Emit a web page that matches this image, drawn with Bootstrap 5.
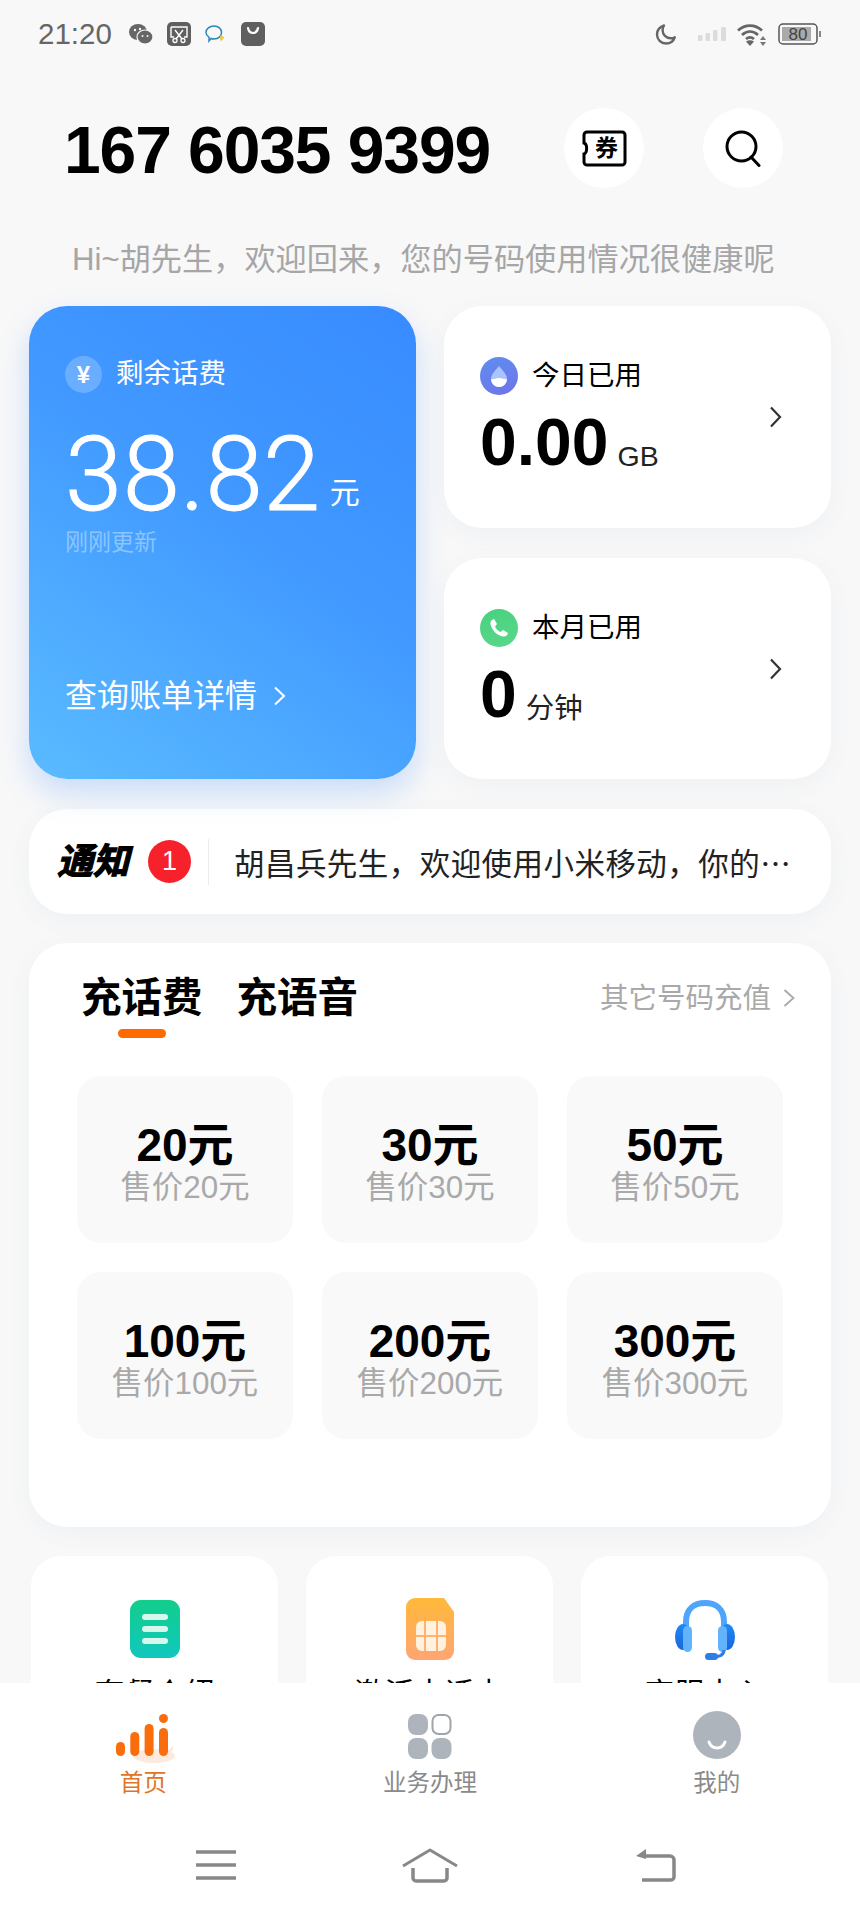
<!DOCTYPE html>
<html lang="zh">
  <head>
    <meta charset="UTF-8" />
    <meta name="viewport" content="width=device-width, initial-scale=1.0" />
    <title>小米移动</title>
    <link
      rel="stylesheet"
      href="https://cdn.jsdelivr.net/npm/bootstrap@5.3.3/dist/css/bootstrap.min.css"
    />
    <style>
      html,
      body {
        height: 1917px;
        overflow: hidden;
      }

      body {
        font-family: "Liberation Sans", "Noto Sans CJK SC", sans-serif;
        background-color: #f8f8f8;
        color: #000;
      }

      svg {
        display: block;
      }

      /* status bar */
      .status-bar {
        height: 66px;
        padding: 2px 38px 0;
        color: #666;
      }

      .status-time {
        font-size: 29.5px;
        width: 77px;
      }

      .status-apps {
        gap: 14px;
      }

      .signal-gap {
        margin: 0 10px 0 21px;
      }

      .battery-gap {
        margin-left: 11px;
      }

      /* header */
      .top-head {
        padding: 42px 77px 0 64px;
        height: 122px;
      }

      .phone-no {
        font-size: 66px;
        font-weight: 700;
        line-height: 84px;
        letter-spacing: -1.1px;
      }

      .head-actions {
        gap: 59px;
      }

      .round-btn {
        width: 80px;
        height: 80px;
        background: #fff;
        border-radius: 50%;
      }

      .ticket-text {
        font-size: 23px;
        font-weight: 700;
        line-height: 1;
      }

      .ticket-box {
        width: 46px;
        height: 37px;
      }

      .ticket-box span {
        position: absolute;
        left: 14px;
        top: 7px;
      }

      .greeting {
        font-size: 31.2px;
        line-height: 40px;
        color: #a6a6a6;
        padding: 52px 0 0 72px;
        height: 118px;
      }

      /* cards */
      .home-body {
        padding: 0 29px;
      }

      .white-card {
        background: #fff;
        border-radius: 38px;
        box-shadow: 0 6px 24px rgba(60, 90, 160, 0.05);
      }

      .usage-grid {
        display: grid;
        grid-template-columns: 387px 387px;
        column-gap: 28px;
        height: 473px;
      }

      .balance-card {
        background: linear-gradient(215deg, #388bff 0%, #4199ff 45%, #5abbff 100%);
        border-radius: 38px;
        box-shadow: 0 14px 30px rgba(60, 140, 255, 0.25);
        color: #fff;
        padding: 49px 0 0 36px;
      }

      .yen-icon {
        width: 37px;
        height: 37px;
        border-radius: 50%;
        background: rgba(255, 255, 255, 0.22);
        font-size: 24px;
        font-weight: 700;
        line-height: 37px;
        text-align: center;
      }

      .card-label {
        font-size: 27.5px;
        line-height: 38px;
      }

      .label-row {
        gap: 14px;
      }

      .balance-num {
        font-family: Roboto, "Liberation Sans", sans-serif;
        font-weight: 300;
        font-size: 103px;
        line-height: 100px;
        letter-spacing: 0.5px;
        -webkit-text-stroke: 1px #fff;
      }

      .balance-unit {
        font-size: 30px;
        line-height: 30px;
        margin-left: 9px;
        margin-bottom: 17px;
      }

      .balance-row {
        margin-top: 32px;
      }

      .balance-time {
        font-size: 23px;
        line-height: 30px;
        color: rgba(255, 255, 255, 0.38);
        margin-top: 2px;
      }

      .balance-link {
        font-size: 32px;
        line-height: 40px;
        margin-top: 119px;
      }

      .usage-col {
        display: grid;
        grid-template-rows: 222px 221px;
        row-gap: 30px;
      }

      .usage-card {
        padding: 51px 47px 0 36px;
      }

      .usage-icon {
        width: 38px;
        height: 38px;
        border-radius: 50%;
      }

      .usage-icon.water {
        background: linear-gradient(160deg, #5f8ef0, #6f73e8);
      }

      .usage-icon.call {
        background: linear-gradient(160deg, #48d17f, #5ad88a);
      }

      .usage-num {
        font-size: 66px;
        line-height: 66px;
        font-weight: 700;
      }

      .usage-unit {
        font-size: 28.5px;
        line-height: 30px;
        margin-left: 9px;
        margin-bottom: 4px;
        color: #222;
      }

      .usage-row {
        margin-top: 14px;
      }

      .usage-arrow {
        position: absolute;
        right: 49px;
        top: 100px;
      }

      /* notice */
      .notice-bar {
        margin-top: 30px;
        height: 105px;
        padding-left: 28px;
      }

      .notice-title {
        font-size: 36px;
        font-weight: 700;
        font-style: italic;
        width: 91px;
        -webkit-text-stroke: 1.2px #000;
        line-height: 40px;
      }

      .notice-count {
        width: 43px;
        height: 43px;
        border-radius: 50%;
        background: #f6212a;
        color: #fff;
        font-size: 27px;
        line-height: 43px;
        text-align: center;
      }

      .notice-sep {
        width: 1px;
        height: 46px;
        background: #ececec;
        margin: 0 25px 0 17px;
      }

      .notice-text {
        font-family: "Noto Sans CJK SC", sans-serif;
        font-size: 30.5px;
        line-height: 40px;
        letter-spacing: 0.45px;
        color: #222;
      }

      /* recharge */
      .recharge-card {
        margin-top: 29px;
        height: 584px;
        padding: 30px 48px 0 48px;
      }

      .recharge-tab {
        font-size: 40.5px;
        font-weight: 700;
        line-height: 50px;
        margin-left: 4px;
      }

      .recharge-tab + .recharge-tab {
        margin-left: 34px;
      }

      .tab-mark {
        width: 48px;
        height: 9px;
        border-radius: 5px;
        background: #ff6a00;
        position: absolute;
        left: 37px;
        top: 56px;
      }

      .other-link {
        font-size: 28.5px;
        line-height: 40px;
        color: #a9a9a9;
        margin-right: -12px;
        gap: 12px;
      }

      .amount-grid {
        display: grid;
        grid-template-columns: repeat(3, 216px);
        grid-auto-rows: 167px;
        column-gap: 29px;
        row-gap: 29px;
        margin-top: 53px;
      }

      .amount-tile {
        background: #f9f9f9;
        border-radius: 24px;
        padding-top: 46px;
        text-align: center;
      }

      .amount-main {
        font-size: 46px;
        font-weight: 700;
        line-height: 46px;
      }

      .amount-sub {
        font-size: 31.4px;
        line-height: 39px;
        color: #a9a9a9;
      }

      /* service cards, cut off by the tab bar */
      .service-grid {
        display: grid;
        grid-template-columns: repeat(3, 247px);
        column-gap: 28px;
        margin: 29px 2px 0;
      }

      .service-card {
        background: #fff;
        border-radius: 30px;
        height: 240px;
        padding-top: 42px;
        text-align: center;
      }

      .service-icon {
        height: 64px;
      }

      .glyph-low {
        margin-top: 2px;
      }

      .service-text {
        font-size: 30px;
        line-height: 40px;
        margin-top: 12px;
      }

      /* tab bar */
      .tab-bar {
        height: 234px;
        background: #fff;
        flex-shrink: 0;
      }

      .tab-row {
        display: grid;
        grid-template-columns: repeat(3, 1fr);
        padding-top: 28px;
        height: 150px;
      }

      .tab-icon {
        height: 52px;
      }

      .glyph-home {
        margin: 3px 0 0 6px;
      }

      .glyph-grid {
        margin-top: 2px;
      }

      .tab-label {
        font-size: 23.5px;
        line-height: 30px;
        color: #8a8a8a;
        margin-top: 5px;
      }

      .tab-label.on {
        color: #e0752a;
      }

      .key-row {
        padding: 15px 184px 0 196px;
      }

      .home-key {
        margin-left: -12px;
      }
    </style>
  </head>
  <body class="d-flex flex-column">
    <div class="flex-grow-1 overflow-hidden">
      <!-- status bar -->
      <div class="status-bar d-flex justify-content-between align-items-center">
        <div class="d-flex align-items-center status-apps">
          <span class="status-time">21:20</span>
          <svg width="24" height="20" viewBox="0 0 24 20">
            <ellipse cx="9" cy="8" rx="9" ry="8" fill="#666" />
            <ellipse cx="16" cy="13" rx="8" ry="7" fill="#666" stroke="#f8f8f8" stroke-width="1.2" />
            <circle cx="6" cy="6" r="1.2" fill="#f8f8f8" />
            <circle cx="11" cy="5" r="1.2" fill="#f8f8f8" />
            <circle cx="13.5" cy="12" r="1" fill="#f8f8f8" />
            <circle cx="18.5" cy="12" r="1" fill="#f8f8f8" />
          </svg>
          <svg width="24" height="24" viewBox="0 0 24 24">
            <rect width="24" height="24" rx="5" fill="#5f5f5f" />
            <path d="M4 5h16v10h-3M4 5v10h3" fill="none" stroke="#fff" stroke-width="1.4" />
            <path d="M8 8l7 9M16 8l-7 9" stroke="#fff" stroke-width="1.4" />
            <circle cx="8" cy="18.5" r="2" fill="none" stroke="#fff" stroke-width="1.3" />
            <circle cx="16" cy="18.5" r="2" fill="none" stroke="#fff" stroke-width="1.3" />
          </svg>
          <svg width="22" height="20" viewBox="0 0 22 20">
            <path d="M9 2c4.400 0 7.500 2.800 7.500 6.500S13.400 15 9 15c-1 0-2-.2-2.800-.5L4 17l.1-3.600C2.200 12 1 10.200 1 8.500 1 4.800 4.600 2 9 2z" fill="none" stroke="#2a86b8" stroke-width="1.500" />
            <path d="M16 11l3.500 2.500-3.500 4-1.500-3.500z" fill="#f0c94f" />
          </svg>
          <svg width="24" height="24" viewBox="0 0 24 24">
            <rect width="24" height="24" rx="5" fill="#5f5f5f" />
            <path d="M7 6c.6 3.400 2.400 5 5 5s4.400-1.600 5-5" fill="none" stroke="#fff" stroke-width="2.200" stroke-linecap="round" />
          </svg>
        </div>
        <div class="d-flex align-items-center">
          <svg width="22" height="21" viewBox="0 0 22 21">
            <path d="M9 1.500C4.800 3 2 6.200 2 10.500c0 5 4 9 9 9 4 0 7.500-2.500 8.800-6.200-1.200.7-2.600 1-4 1-4.800 0-8.200-3.800-8.200-8 0-2 .4-3.500 1.400-4.800z" fill="none" stroke="#666" stroke-width="2.400" stroke-linejoin="round" />
          </svg>
          <svg class="signal-gap" width="28" height="14" viewBox="0 0 28 14">
            <rect x="0" y="8" width="4.500" height="6" rx="1" fill="#dcdcdc" />
            <rect x="7.500" y="6" width="4.500" height="8" rx="1" fill="#dcdcdc" />
            <rect x="15" y="3" width="4.500" height="11" rx="1" fill="#dcdcdc" />
            <rect x="23" y="0" width="5" height="14" rx="1" fill="#dcdcdc" />
          </svg>
          <svg width="31" height="23" viewBox="0 0 31 23">
            <path d="M2 7.500C9 1 19 1 26 7.500M6 12c5-4.500 11-4.500 16 0M10 16c2.800-2.300 5.200-2.300 8 0" fill="none" stroke="#666" stroke-width="2.800" />
            <path d="M14 23l-4-4.500c2.500-1.700 5.500-1.700 8 0z" fill="#666" />
            <path d="M27 13l3 4h-6zM27 23l3-4h-6z" fill="#777" />
          </svg>
          <svg class="battery-gap" width="44" height="22" viewBox="0 0 44 22">
            <rect x="1" y="1" width="38" height="20" rx="4" fill="none" stroke="#555" stroke-width="1.500" />
            <rect x="4" y="4" width="29" height="14" fill="#aaa" />
            <rect x="41" y="8" width="2" height="6" fill="#888" />
            <text x="20" y="17" text-anchor="middle" font-size="17" fill="#444" font-family="Liberation Sans">80</text>
          </svg>
        </div>
      </div>

      <!-- number and actions -->
      <div class="top-head d-flex justify-content-between">
        <div class="phone-no">167 6035 9399</div>
        <div class="d-flex head-actions">
          <div class="round-btn d-flex align-items-center justify-content-center">
            <div class="ticket-box position-relative">
              <svg width="46" height="37" viewBox="0 0 46 37">
                <path d="M6 2h35a3 3 0 0 1 3 3v27a3 3 0 0 1-3 3H6a3 3 0 0 1-3-3v-8c3.500-1 3.500-10 0-11V5a3 3 0 0 1 3-3z" fill="none" stroke="#000" stroke-width="3" />
              </svg>
              <span class="ticket-text">券</span>
            </div>
          </div>
          <div class="round-btn d-flex align-items-center justify-content-center">
            <svg width="37" height="37" viewBox="0 0 37 37">
              <circle cx="16.500" cy="16.500" r="14.500" fill="none" stroke="#000" stroke-width="3" />
              <path d="M26 27l8 8.500" stroke="#000" stroke-width="3" stroke-linecap="round" />
            </svg>
          </div>
        </div>
      </div>

      <div class="greeting">Hi~胡先生，欢迎回来，您的号码使用情况很健康呢</div>

      <div class="home-body">
        <div class="usage-grid">
          <div class="balance-card">
            <div class="d-flex align-items-center label-row">
              <div class="yen-icon">¥</div>
              <div class="card-label">剩余话费</div>
            </div>
            <div class="balance-row d-flex align-items-end">
              <div class="balance-num">38.82</div>
              <div class="balance-unit">元</div>
            </div>
            <div class="balance-time">刚刚更新</div>
            <div class="balance-link d-flex align-items-center gap-3">
              查询账单详情
              <svg width="13" height="20" viewBox="0 0 13 20">
                <path d="M2 1.500l9 8.500-9 8.500" fill="none" stroke="#fff" stroke-width="2" />
              </svg>
            </div>
          </div>

          <div class="usage-col">
            <div class="white-card usage-card position-relative">
              <div class="d-flex align-items-center label-row">
                <div class="usage-icon water d-flex align-items-center justify-content-center">
                  <svg width="18" height="22" viewBox="0 0 18 22">
                    <path d="M9 1c3 4 8 8 8 13a8 8 0 0 1-16 0c0-5 5-9 8-13z" fill="#a9c4ff" />
                    <path d="M1 14c2 1 4-1 8-1s6 2 8 1a8 8 0 0 1-16 0z" fill="#fff" />
                  </svg>
                </div>
                <div class="card-label">今日已用</div>
              </div>
              <div class="usage-row d-flex align-items-end">
                <div class="usage-num">0.00</div>
                <div class="usage-unit">GB</div>
              </div>
              <svg class="usage-arrow" width="13" height="22" viewBox="0 0 13 22">
                <path d="M2 1.500l9 9.500-9 9.500" fill="none" stroke="#333" stroke-width="2.200" />
              </svg>
            </div>
            <div class="white-card usage-card position-relative">
              <div class="d-flex align-items-center label-row">
                <div class="usage-icon call d-flex align-items-center justify-content-center">
                  <svg width="22" height="22" viewBox="0 0 22 22">
                    <path d="M6 2l3 5-2 2.500c1 2.500 3 4.500 5.500 5.500l2.500-2 5 3c-.5 2.500-2.500 4-5 3.500C9 18.500 3.500 13 2.500 7 2 4.500 3.500 2.500 6 2z" fill="#fff" />
                  </svg>
                </div>
                <div class="card-label">本月已用</div>
              </div>
              <div class="usage-row d-flex align-items-end">
                <div class="usage-num">0</div>
                <div class="usage-unit">分钟</div>
              </div>
              <svg class="usage-arrow" width="13" height="22" viewBox="0 0 13 22">
                <path d="M2 1.500l9 9.500-9 9.500" fill="none" stroke="#333" stroke-width="2.200" />
              </svg>
            </div>
          </div>
        </div>

        <!-- notice -->
        <div class="white-card notice-bar d-flex align-items-center">
          <div class="notice-title">通知</div>
          <div class="notice-count">1</div>
          <div class="notice-sep"></div>
          <div class="notice-text">胡昌兵先生，欢迎使用小米移动，你的…</div>
        </div>

        <!-- recharge -->
        <div class="white-card recharge-card">
          <div class="d-flex justify-content-between align-items-center">
            <div class="d-flex">
              <div class="recharge-tab position-relative">
                充话费
                <div class="tab-mark"></div>
              </div>
              <div class="recharge-tab">充语音</div>
            </div>
            <div class="other-link d-flex align-items-center">
              其它号码充值
              <svg width="12" height="18" viewBox="0 0 12 18">
                <path d="M1.500 1l9 8-9 8" fill="none" stroke="#a9a9a9" stroke-width="1.800" />
              </svg>
            </div>
          </div>
          <div class="amount-grid">
            <div class="amount-tile"><div class="amount-main">20元</div><div class="amount-sub">售价20元</div></div>
            <div class="amount-tile"><div class="amount-main">30元</div><div class="amount-sub">售价30元</div></div>
            <div class="amount-tile"><div class="amount-main">50元</div><div class="amount-sub">售价50元</div></div>
            <div class="amount-tile"><div class="amount-main">100元</div><div class="amount-sub">售价100元</div></div>
            <div class="amount-tile"><div class="amount-main">200元</div><div class="amount-sub">售价200元</div></div>
            <div class="amount-tile"><div class="amount-main">300元</div><div class="amount-sub">售价300元</div></div>
          </div>
        </div>

        <!-- services -->
        <div class="service-grid">
          <div class="service-card">
            <div class="service-icon d-flex justify-content-center">
              <svg class="glyph-low" width="50" height="58" viewBox="0 0 50 58">
                <defs>
                  <linearGradient id="gGreen" x1="0" y1="0" x2="0" y2="1">
                    <stop offset="0" stop-color="#12ce8b" />
                    <stop offset="1" stop-color="#10c7be" />
                  </linearGradient>
                </defs>
                <rect width="50" height="58" rx="11" fill="url(#gGreen)" />
                <rect x="12" y="14" width="26" height="6" rx="3" fill="#d5f7ec" />
                <rect x="12" y="26" width="26" height="6" rx="3" fill="#d5f7ec" />
                <rect x="12" y="38" width="26" height="6" rx="3" fill="#d5f7ec" />
              </svg>
            </div>
            <div class="service-text">套餐介绍</div>
          </div>
          <div class="service-card">
            <div class="service-icon d-flex justify-content-center">
              <svg width="48" height="62" viewBox="0 0 48 62">
                <defs>
                  <linearGradient id="gSim" x1="0" y1="0" x2="0" y2="1">
                    <stop offset="0" stop-color="#ffb93a" />
                    <stop offset="1" stop-color="#ffa573" />
                  </linearGradient>
                </defs>
                <path d="M9 0h29l10 14v39a9 9 0 0 1-9 9H9a9 9 0 0 1-9-9V9a9 9 0 0 1 9-9z" fill="url(#gSim)" />
                <rect x="10" y="23" width="30" height="30" rx="6" fill="#fff2df" />
                <path d="M10 38h30M19 23v30M31 23v30" stroke="#ffb273" stroke-width="2" />
              </svg>
            </div>
            <div class="service-text">激活电话卡</div>
          </div>
          <div class="service-card">
            <div class="service-icon d-flex justify-content-center">
              <svg class="glyph-low" width="62" height="62" viewBox="0 0 62 62">
                <defs>
                  <linearGradient id="gHead" x1="0" y1="0" x2="0" y2="1">
                    <stop offset="0" stop-color="#1e88f5" />
                    <stop offset="1" stop-color="#1a66e0" />
                  </linearGradient>
                </defs>
                <path d="M12 32V22C12 9 20 3 31 3s19 6 19 19v10" fill="none" stroke="#4fa5fb" stroke-width="6" />
                <ellipse cx="9" cy="37" rx="8" ry="13" fill="url(#gHead)" />
                <ellipse cx="53" cy="37" rx="8" ry="13" fill="url(#gHead)" />
                <rect x="9" y="26" width="9" height="26" rx="4.500" fill="#62b3fb" />
                <rect x="44" y="26" width="9" height="26" rx="4.500" fill="#62b3fb" />
                <path d="M50 50c0 5-5 7-12 7" fill="none" stroke="#2d7ee8" stroke-width="3" />
                <rect x="31" y="53" width="13" height="7" rx="3.500" fill="#2d7ee8" />
              </svg>
            </div>
            <div class="service-text">客服中心</div>
          </div>
        </div>
      </div>
    </div>

    <!-- bottom tabs and system keys -->
    <div class="tab-bar">
      <div class="tab-row text-center">
        <div>
          <div class="tab-icon d-flex justify-content-center">
            <svg class="glyph-home" width="60" height="50" viewBox="0 0 60 50">
              <path d="M14 42h34c6-1 10-5 9-11-2 4-3 5-5 5l-2 6z" fill="#fde5d8" />
              <ellipse cx="38" cy="42" rx="21" ry="7" fill="#fdeadf" />
              <rect x="0" y="28" width="9" height="14" rx="4.500" fill="#fa6d0d" />
              <rect x="14.300" y="18" width="9" height="24" rx="4.500" fill="#fa6d0d" />
              <rect x="28.600" y="10" width="9" height="32" rx="4.500" fill="#fa6d0d" />
              <rect x="43" y="14" width="9" height="28" rx="4.500" fill="#fa6d0d" />
              <circle cx="47.500" cy="4.500" r="4.500" fill="#fa6d0d" />
            </svg>
          </div>
          <div class="tab-label on">首页</div>
        </div>
        <div>
          <div class="tab-icon d-flex justify-content-center">
            <svg class="glyph-grid" width="44" height="46" viewBox="0 0 44 46">
              <rect x="0" y="1" width="20" height="21" rx="8" fill="#adb4bb" />
              <rect x="24.500" y="2" width="18" height="19" rx="6" fill="#fff" stroke="#a0a5aa" stroke-width="2" />
              <rect x="0" y="25" width="20" height="21" rx="8" fill="#adb4bb" />
              <rect x="23.500" y="25" width="20" height="21" rx="8" fill="#adb4bb" />
            </svg>
          </div>
          <div class="tab-label">业务办理</div>
        </div>
        <div>
          <div class="tab-icon d-flex justify-content-center">
            <svg width="48" height="48" viewBox="0 0 48 48">
              <circle cx="24" cy="24" r="24" fill="#adb4bb" />
              <path d="M16 31c1.500 4 4.500 6 8 6s6.500-2 8-6" fill="none" stroke="#fff" stroke-width="3" stroke-linecap="round" />
            </svg>
          </div>
          <div class="tab-label">我的</div>
        </div>
      </div>
      <div class="key-row d-flex justify-content-between">
        <svg width="40" height="34" viewBox="0 0 40 34">
          <path d="M0 4h40M0 17h40M0 30h40" stroke="#888" stroke-width="3.500" />
        </svg>
        <svg class="home-key" width="56" height="35" viewBox="0 0 56 35">
          <path d="M1 18L28 2l27 16" fill="none" stroke="#888" stroke-width="3" stroke-linejoin="round" />
          <path d="M11 20v10a3 3 0 0 0 3 3h28a3 3 0 0 0 3-3V20" fill="none" stroke="#888" stroke-width="3.500" />
        </svg>
        <svg width="40" height="35" viewBox="0 0 40 35">
          <path d="M6 8h28a4 4 0 0 1 4 4v17a3 3 0 0 1-3 3H6" fill="none" stroke="#888" stroke-width="3.500" />
          <path d="M0 8L10 1v10z" fill="#888" />
        </svg>
      </div>
    </div>

    <script src="https://cdn.jsdelivr.net/npm/bootstrap@5.3.3/dist/js/bootstrap.bundle.min.js"></script>
  </body>
</html>
